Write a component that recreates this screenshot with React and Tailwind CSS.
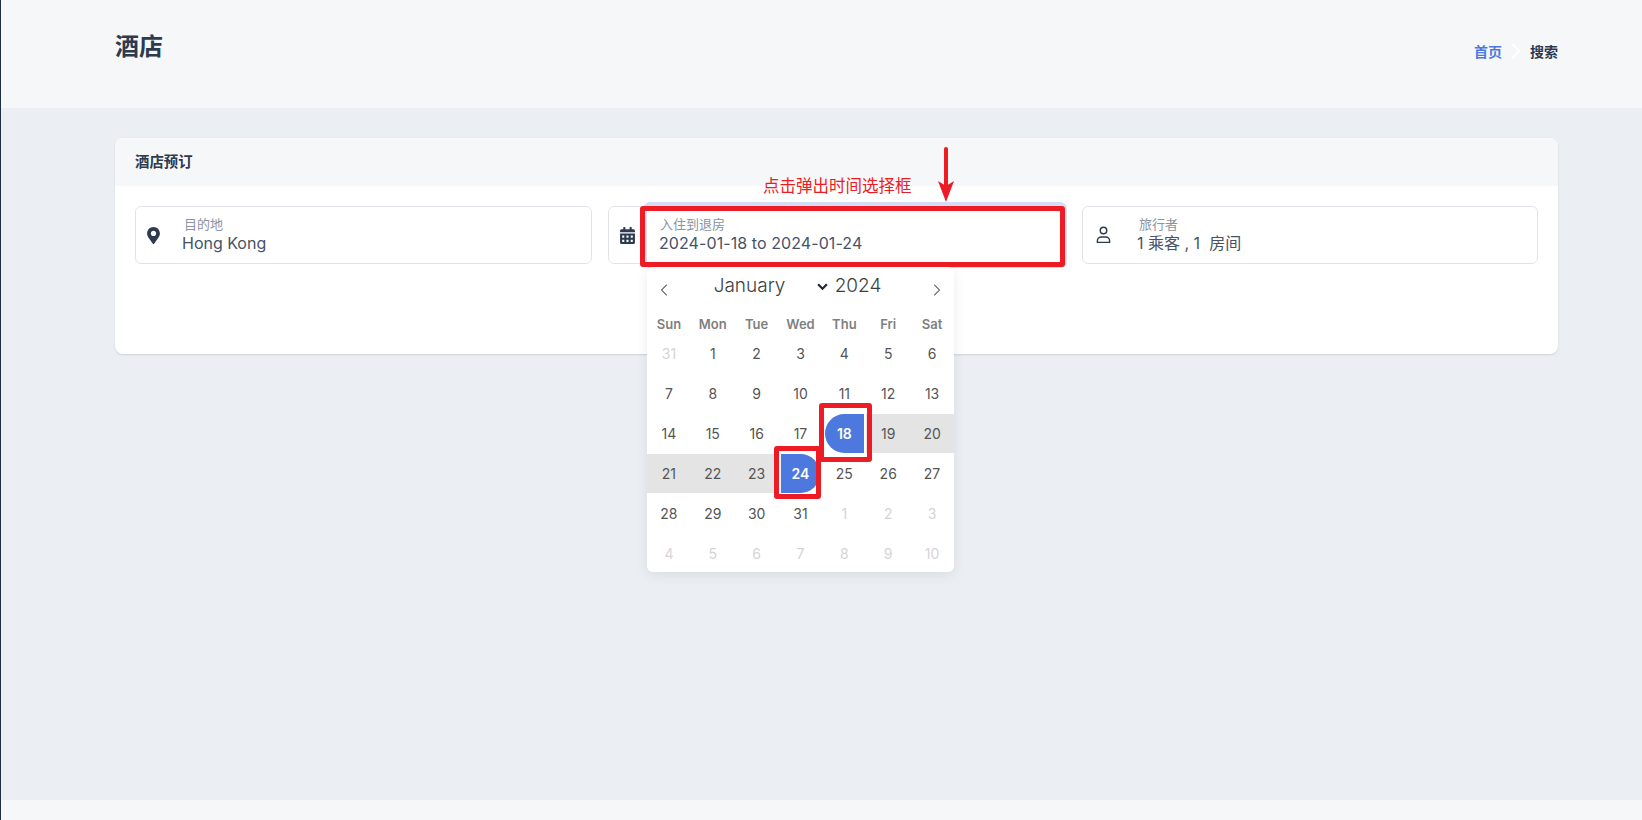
import { FaCalendarAlt, FaMapMarkerAlt } from 'react-icons/fa';
import { ChevronLeft, ChevronRight } from 'lucide-react';

const WEEKDAYS = ['Sun', 'Mon', 'Tue', 'Wed', 'Thu', 'Fri', 'Sat'];

// flatpickr style month grid: leading/trailing days are greyed out
const DAYS = [
  31, ...Array.from({ length: 31 }, (_, i) => i + 1),
  1, 2, 3, 4, 5, 6, 7, 8, 9, 10,
];

function dayClasses(index) {
  const day = DAYS[index];
  const outside = index === 0 || index > 31;
  if (outside) return 'w-full text-[#d4d4d6]';
  if (day === 18) return 'w-[39px] bg-[#4d79de] text-white font-semibold rounded-l-[20px]';
  if (day === 24) return 'w-[39px] bg-[#4d79de] text-white font-semibold rounded-r-[20px]';
  if (day === 19 || day === 20 || (day >= 21 && day <= 23)) return 'w-full bg-[#e4e4e4] text-[#555]';
  return 'w-full text-[#555]';
}

function UserIcon() {
  return (
    <svg viewBox="0 0 16 20" className="w-[15px] h-[18px]" fill="none" stroke="currentColor" strokeWidth="1.6">
      <circle cx="8" cy="5" r="3.6" />
      <path d="M1.2 18.2v-1.6c0-2.6 2-4.4 4.4-4.4h4.8c2.4 0 4.4 1.8 4.4 4.4v1.6z" strokeLinejoin="round" />
    </svg>
  );
}

function Field({ icon, label, value, iconClass, labelClass, valueClass }) {
  return (
    <div className="h-[58px] rounded-md border border-[#e0e4ea] bg-white flex items-center">
      <div className={`w-[36px] flex justify-center text-[#2d3a4f] shrink-0 ${iconClass}`}>{icon}</div>
      <div className="min-w-0 ml-[10px]">
        <div className={`text-[13px] leading-[16px] text-[#8b93a1] ${labelClass}`}>{label}</div>
        <div className={`text-[16px] leading-[22px] text-[#475266] whitespace-pre ${valueClass}`}>{value}</div>
      </div>
    </div>
  );
}

function Calendar() {
  return (
    <div className="absolute left-[646px] top-[267px] w-[307px] h-[305px] bg-white rounded-md shadow-[0_3px_13px_rgba(0,0,0,0.08)] z-10">
      <div className="h-[44px] pb-[6px] flex items-center justify-between pl-[7px] pr-[7px] text-[#3c3f40]">
        <ChevronLeft className="w-5 h-5 mt-[8px]" strokeWidth={1.25} />
        <div className="flex items-center text-[19px] font-light mr-[6px]">
          <span className="w-[103px]">January</span>
          <svg viewBox="0 0 10 6" className="w-[11px] h-[7px] mr-[7px]" fill="none" stroke="#1f2937" strokeWidth="2">
            <path d="M1 1l4 4 4-4" />
          </svg>
          <span>2024</span>
        </div>
        <ChevronRight className="w-5 h-5 mt-[8px]" strokeWidth={1.25} />
      </div>
      <div className="grid grid-cols-7 h-[26px] items-center mt-[1px]">
        {WEEKDAYS.map((d) => (
          <div key={d} className="text-center text-[13px] font-semibold text-[#7f7f80]">{d}</div>
        ))}
      </div>
      <div className="grid grid-cols-7 auto-rows-[40px] mt-[-4px]">
        {DAYS.map((d, i) => (
          <div key={i} className="flex justify-center">
            <div className={`h-[39px] flex items-center justify-center text-[14px] ${dayClasses(i)}`}>{d}</div>
          </div>
        ))}
      </div>
    </div>
  );
}

function Annotations() {
  return (
    <>
      <div className="absolute left-[762px] top-[175px] text-[16.5px] leading-[22px] text-[#ed1c24] z-20">点击弹出时间选择框</div>
      <svg className="absolute left-[935px] top-[147px] z-20" width="20" height="57" viewBox="0 0 20 57">
        <path d="M10 2v39" stroke="#ed1c24" strokeWidth="4" strokeLinecap="round" />
        <path d="M2 34l8 21 8-21-8 5z" fill="#ed1c24" />
      </svg>
      <div className="absolute left-[639px] top-[206px] w-[425px] h-[61px] border-[5px] border-[#ed1c24] rounded-[3px] z-20" />
      <div className="absolute left-[818px] top-[403px] w-[53px] h-[59px] border-[5px] border-[#ed1c24] rounded-[3px] z-20" />
      <div className="absolute left-[773px] top-[446px] w-[47px] h-[53px] border-[5px] border-[#ed1c24] rounded-[3px] z-20" />
    </>
  );
}

export default function App() {
  return (
    <div
      className="relative h-[820px] overflow-hidden flex flex-col bg-[#ebeef3] border-l border-[#1f2d45]"
      style={{ fontFamily: 'Inter, "Noto Sans CJK SC", sans-serif' }}
    >
      <header className="h-[108px] shrink-0 bg-[#f5f7f9] pl-[114px] pr-[84px] flex justify-between">
        <h1 className="mt-[29px] text-[24px] leading-[36px] font-bold text-[#2d3a4f]">酒店</h1>
        <nav className="mt-[41px] flex items-center h-[20px] text-[14px] font-semibold">
          <span className="text-[#4d79de]">首页</span>
          <ChevronRight className="w-[26px] h-[26px] mx-[1px] text-white" strokeWidth={1.75} />
          <span className="text-[#2d3a4f]">搜索</span>
        </nav>
      </header>

      <main className="flex-1 pt-[30px] pl-[114px] pr-[84px]">
        <section className="h-[216px] rounded-lg bg-white overflow-hidden shadow-[0_1px_2px_rgba(56,65,74,0.15)]">
          <div className="h-[48px] pb-[1px] bg-[#f5f7f9] px-[20px] flex items-center text-[14.4px] font-bold text-[#2d3a4f]">酒店预订</div>
          <div className="grid grid-cols-[457px_458px_456px] gap-[16px] px-[20px] pt-[20px]">
            <Field
              icon={<FaMapMarkerAlt className="w-[13px] h-[17px]" />}
              iconClass="ml-[-1px]"
              label="目的地"
              labelClass="ml-[3px]"
              valueClass="ml-[1px]"
              value="Hong Kong"
            />
            <div className="relative">
              <Field
                icon={<FaCalendarAlt className="w-[15px] h-[17px]" />}
                label="入住到退房"
                labelClass="ml-[5px]"
                valueClass="ml-[4px] tracking-[0.08px]"
                value="2024-01-18 to 2024-01-24"
              />
              <div className="absolute left-[39px] right-[3px] top-0 bottom-0 rounded-[3px] shadow-[0_0_0_4px_#d3ddf4]" />
            </div>
            <Field
              icon={<UserIcon />}
              iconClass="ml-[2px]"
              label="旅行者"
              labelClass="ml-[8px]"
              valueClass="ml-[6px]"
              value="1 乘客 , 1  房间"
            />
          </div>
        </section>
      </main>

      <footer className="h-[20px] shrink-0 bg-[#f5f7f9]" />

      <Calendar />
      <Annotations />
    </div>
  );
}
